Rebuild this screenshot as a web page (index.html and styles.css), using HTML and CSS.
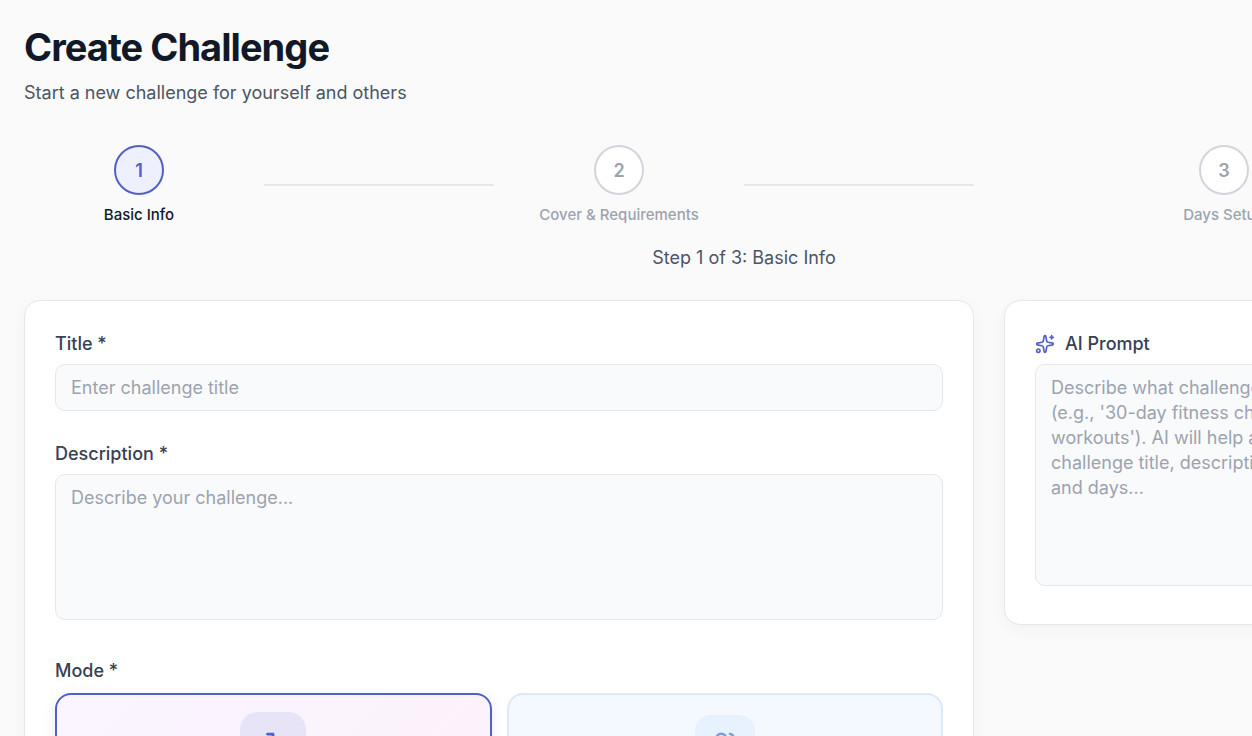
FILE: index.html
```html
<!DOCTYPE html>
<html lang="en">
<head>
    <meta charset="UTF-8">
    <meta name="viewport" content="width=device-width, initial-scale=1.0">
    <title>Create Challenge</title>
    <link rel="stylesheet" href="styles.css">
</head>
<body>
    <main class="page">
        <header class="page-header">
            <h1>Create Challenge</h1>
            <p>Start a new challenge for yourself and others</p>
        </header>

        <ol class="stepper">
            <li class="stepper-item active" aria-current="step">
                <div class="step">
                    <span class="step-number">1</span>
                    <span class="step-label">Basic Info</span>
                </div>
                <div class="step-line"></div>
            </li>
            <li class="stepper-item">
                <div class="step">
                    <span class="step-number">2</span>
                    <span class="step-label">Cover &amp; Requirements</span>
                </div>
                <div class="step-line"></div>
            </li>
            <li class="stepper-item">
                <div class="step">
                    <span class="step-number">3</span>
                    <span class="step-label">Days Setup</span>
                </div>
            </li>
        </ol>
        <p class="step-summary">Step 1 of 3: Basic Info</p>

        <form class="layout">
            <section class="card">
                <div class="field">
                    <label for="title">Title *</label>
                    <input type="text" id="title" placeholder="Enter challenge title">
                </div>

                <div class="field">
                    <label for="description">Description *</label>
                    <textarea id="description" class="description" placeholder="Describe your challenge..."></textarea>
                </div>

                <div class="field mode-field" role="group" aria-labelledby="mode-label">
                    <span class="field-label" id="mode-label">Mode *</span>
                    <div class="modes">
                        <button type="button" class="mode mode-auto selected" aria-label="Automatic" aria-pressed="true">
                            <span class="mode-icon">
                                <svg viewBox="0 0 24 24" aria-hidden="true">
                                    <path d="M12 8V4H8"/>
                                    <rect width="16" height="12" x="4" y="8" rx="2"/>
                                    <path d="M2 14h2"/>
                                    <path d="M20 14h2"/>
                                    <path d="M15 13v2"/>
                                    <path d="M9 13v2"/>
                                </svg>
                            </span>
                        </button>
                        <button type="button" class="mode mode-group" aria-label="Group" aria-pressed="false">
                            <span class="mode-icon">
                                <svg viewBox="0 0 24 24" aria-hidden="true">
                                    <path d="M16 21v-2a4 4 0 0 0-4-4H6a4 4 0 0 0-4 4v2"/>
                                    <circle cx="9" cy="7" r="4"/>
                                    <path d="M22 21v-2a4 4 0 0 0-3-3.87"/>
                                    <path d="M16 3.13a4 4 0 0 1 0 7.75"/>
                                </svg>
                            </span>
                        </button>
                    </div>
                </div>
            </section>

            <aside class="card">
                <div class="field">
                    <label for="prompt">
                        <svg class="sparkles" viewBox="0 0 24 24" aria-hidden="true">
                            <path d="M11.017 2.814a1 1 0 0 1 1.966 0l1.051 5.558a2 2 0 0 0 1.594 1.594l5.558 1.051a1 1 0 0 1 0 1.966l-5.558 1.051a2 2 0 0 0-1.594 1.594l-1.051 5.558a1 1 0 0 1-1.966 0l-1.051-5.558a2 2 0 0 0-1.594-1.594l-5.558-1.051a1 1 0 0 1 0-1.966l5.558-1.051a2 2 0 0 0 1.594-1.594z"/>
                            <path d="M20 2v4"/>
                            <path d="M22 4h-4"/>
                            <circle cx="4" cy="20" r="2"/>
                        </svg>
                        AI Prompt
                    </label>
                    <textarea id="prompt" class="prompt" placeholder="Describe what challenge you want&#10;(e.g., '30-day fitness challenge with&#10;workouts'). AI will help auto-generate&#10;challenge title, description, rules&#10;and days..."></textarea>
                </div>
            </aside>
        </form>
    </main>
</body>
</html>
```
FILE: styles.css
```css
* {
    box-sizing: border-box;
}
body {
    margin: 0;
    padding: 24px;
    background: #fafafa;
    color: #111827;
    font-family: Inter, sans-serif;
    font-size: 18px;
    line-height: 25px;
    overflow: hidden;
}
.page {
    min-width: 1440px;
}
.page-header {
    margin-bottom: 40px;
}
.page-header h1 {
    margin: 0 0 10px;
    font-size: 38px;
    font-weight: 700;
    line-height: 46px;
    letter-spacing: -0.025em;
}
.page-header p {
    margin: 0;
    color: #4b5563;
}
.stepper {
    display: flex;
    margin: 0 0 20px;
    padding: 0;
    list-style: none;
}
.stepper-item {
    flex: 1;
    display: flex;
    align-items: center;
}
.step {
    flex: 1;
    display: flex;
    flex-direction: column;
    align-items: center;
    gap: 10px;
}
.step-number {
    display: flex;
    align-items: center;
    justify-content: center;
    width: 50px;
    height: 50px;
    border: 2px solid #d1d5db;
    border-radius: 50%;
    background: #fff;
    color: #9ca3af;
    font-weight: 600;
}
.step-label {
    color: #9ca3af;
    font-size: 15px;
    font-weight: 500;
    line-height: 20px;
}
.step-line {
    flex: 1;
    height: 2px;
    margin: 0 10px;
    background: #e5e7eb;
}
.active .step-number {
    border-color: #525fc5;
    background: #eef0fd;
    color: #525fc5;
}
.active .step-label {
    color: #111827;
}
.step-summary {
    margin: 0 0 30px;
    color: #4b5563;
    text-align: center;
}
.layout {
    display: grid;
    grid-template-columns: minmax(0, 1fr) 460px;
    gap: 30px;
    align-items: start;
}
.card {
    padding: 30px;
    border: 1px solid #e5e7eb;
    border-radius: 16px;
    background: #fff;
    box-shadow: 0 4px 16px rgba(0, 0, 0, 0.04);
}
.field {
    display: flex;
    flex-direction: column;
    gap: 8px;
    margin-bottom: 30px;
}
.field label,
.field-label {
    display: flex;
    align-items: center;
    gap: 10px;
    color: #374151;
    font-weight: 500;
}
input,
textarea {
    display: block;
    width: 100%;
    padding: 10px 15px;
    border: 1px solid #e5e7eb;
    border-radius: 10px;
    background: #f9fafb;
    color: #111827;
    font: inherit;
    resize: none;
}
input::placeholder,
textarea::placeholder {
    color: #9ca3af;
}
.description {
    height: 146px;
    margin-bottom: 8px;
}
.prompt {
    height: 222px;
}
aside .field {
    margin-bottom: 8px;
}
.sparkles {
    width: 20px;
    height: 20px;
    fill: none;
    stroke: #525fc5;
    stroke-width: 2;
    stroke-linecap: round;
    stroke-linejoin: round;
}
.mode-field {
    gap: 10px;
}
.modes {
    display: grid;
    grid-template-columns: 1fr 1fr;
    gap: 15px;
}
.mode {
    display: flex;
    flex-direction: column;
    align-items: center;
    min-height: 200px;
    padding: 20px;
    border: 2px solid #dbe9f8;
    border-radius: 16px;
    font: inherit;
    cursor: pointer;
}
.mode-auto {
    background: linear-gradient(135deg, #faf5ff, #fcf1fa);
    color: #525fc5;
}
.mode-group {
    background: #f4f8ff;
    color: #7c9ce0;
}
.mode.selected {
    border-color: #525fc5;
    box-shadow: 0 4px 12px rgba(82, 95, 197, 0.15);
}
.mode-icon {
    display: flex;
    align-items: center;
    justify-content: center;
    width: 60px;
    height: 60px;
    border-radius: 16px;
    background: #e8f1fe;
}
.selected .mode-icon {
    background: #e7e4f7;
    transform: scale(1.1);
}
.mode-icon svg {
    width: 30px;
    height: 30px;
    fill: none;
    stroke: currentColor;
    stroke-width: 2;
    stroke-linecap: round;
    stroke-linejoin: round;
}
```
